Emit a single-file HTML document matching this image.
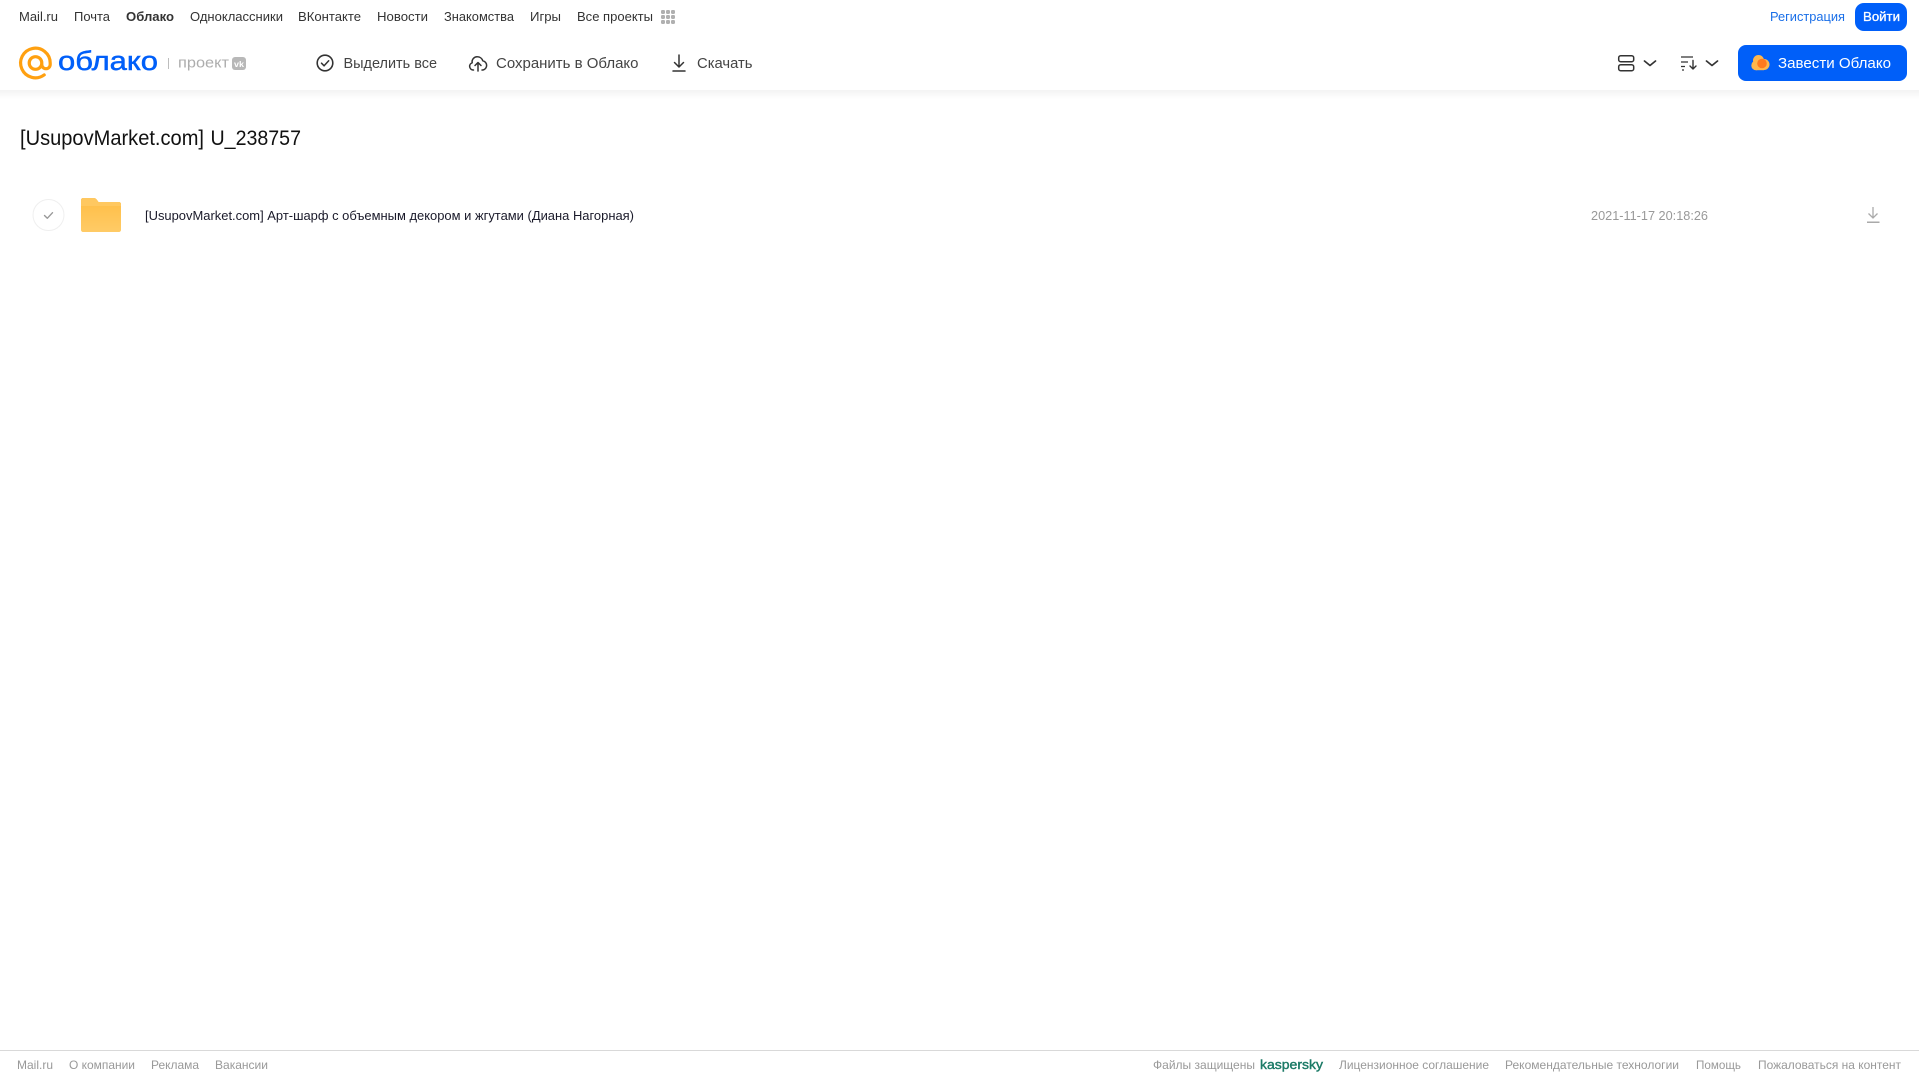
<!DOCTYPE html>
<html lang="ru">
<head>
<meta charset="utf-8">
<title>[UsupovMarket.com] U_238757</title>
<style>
html,body{margin:0;padding:0;background:#fff;width:1919px;height:1079px;overflow:hidden}
svg{display:block;position:absolute;left:0;top:0}
text{font-family:"Liberation Sans",Arial,sans-serif;white-space:pre}
.n{font-size:13px;fill:#333}
.a{font-size:15px;fill:#444}
.f{font-size:12px;fill:#999}
</style>
</head>
<body>
<svg width="1919" height="1079" viewBox="0 0 1919 1079" xmlns="http://www.w3.org/2000/svg">
<defs>
<linearGradient id="sh" x1="0" y1="0" x2="0" y2="1"><stop offset="0" stop-color="#f3f3f3"/><stop offset="1" stop-color="#ffffff"/></linearGradient>
<linearGradient id="fo" x1="0" y1="0" x2="0" y2="1"><stop offset="0" stop-color="#ffbd45"/><stop offset="1" stop-color="#ffcb66"/></linearGradient>
</defs>
<rect x="0" y="90" width="1919" height="9" fill="url(#sh)"/>

<!-- top nav -->
<text class="n" x="19" y="21" textLength="39" lengthAdjust="spacingAndGlyphs">Mail.ru</text>
<text class="n" x="74" y="21" textLength="36" lengthAdjust="spacingAndGlyphs">Почта</text>
<text class="n" x="126" y="21" textLength="48" lengthAdjust="spacingAndGlyphs" font-weight="700">Облако</text>
<text class="n" x="190" y="21" textLength="93" lengthAdjust="spacingAndGlyphs">Одноклассники</text>
<text class="n" x="298" y="21" textLength="63" lengthAdjust="spacingAndGlyphs">ВКонтакте</text>
<text class="n" x="377" y="21" textLength="51" lengthAdjust="spacingAndGlyphs">Новости</text>
<text class="n" x="444" y="21" textLength="70" lengthAdjust="spacingAndGlyphs">Знакомства</text>
<text class="n" x="530" y="21" textLength="31" lengthAdjust="spacingAndGlyphs">Игры</text>
<text class="n" x="577" y="21" textLength="76" lengthAdjust="spacingAndGlyphs">Все проекты</text>
<g fill="#b0b0b0">
<rect x="661" y="10" width="4" height="4" rx="1.200"/><rect x="666" y="10" width="4" height="4" rx="1.200"/><rect x="671" y="10" width="4" height="4" rx="1.200"/>
<rect x="661" y="15" width="4" height="4" rx="1.200"/><rect x="666" y="15" width="4" height="4" rx="1.200"/><rect x="671" y="15" width="4" height="4" rx="1.200"/>
<rect x="661" y="20" width="4" height="4" rx="1.200"/><rect x="666" y="20" width="4" height="4" rx="1.200"/><rect x="671" y="20" width="4" height="4" rx="1.200"/>
</g>
<text x="1770" y="21" font-size="13" fill="#1a6fe8" textLength="75" lengthAdjust="spacingAndGlyphs">Регистрация</text>
<rect x="1855" y="3" width="52" height="28" rx="9" fill="#005ff9"/>
<text x="1863" y="21" font-size="13" fill="#fff" stroke="#fff" stroke-width=".3" textLength="37" lengthAdjust="spacingAndGlyphs">Войти</text>

<!-- logo -->
<path d="M41.800 63a6.300 6.300 0 1 1-12.600 0a6.300 6.300 0 1 1 12.600 0v1.500a4.200 4.200 0 0 0 8.400 0V63a14.800 14.800 0 1 0-6 11.900" fill="none" stroke="#ffa010" stroke-width="3.200" stroke-linecap="round"/>
<text x="58" y="70" font-size="27" fill="#005ff9" stroke="#005ff9" stroke-width=".5" textLength="100" lengthAdjust="spacingAndGlyphs">облако</text>
<rect x="168" y="58" width="1" height="11" fill="#bdbdbd"/>
<text x="178" y="67.500" font-size="15" fill="#adadad" textLength="51" lengthAdjust="spacingAndGlyphs">проект</text>
<rect x="232" y="57" width="14" height="13" rx="3" fill="#b8b8b8"/>
<text x="234" y="67" font-size="8.500" font-weight="700" fill="#fff" textLength="10" lengthAdjust="spacingAndGlyphs">vk</text>

<!-- actions -->
<circle cx="325" cy="63" r="7.800" fill="none" stroke="#333" stroke-width="1.600"/>
<path d="M321.500 63.200l2.600 2.600 4.600-5" fill="none" stroke="#333" stroke-width="1.500" stroke-linecap="round" stroke-linejoin="round"/>
<text class="a" x="343.500" y="68" textLength="93.500" lengthAdjust="spacingAndGlyphs">Выделить все</text>

<path d="M473.500 70h-.5a3.700 3.700 0 0 1-.8-7.200a5 5 0 0 1 5.300-6a5.800 5.800 0 0 1 5.300 4a4.700 4.700 0 0 1 .2 9.200h-1" fill="none" stroke="#333" stroke-width="1.500" stroke-linecap="round" stroke-linejoin="round"/>
<path d="M478 71v-8M475 65.500l3-3 3 3" fill="none" stroke="#333" stroke-width="1.500" stroke-linecap="round" stroke-linejoin="round"/>
<text class="a" x="496" y="68" textLength="142.500" lengthAdjust="spacingAndGlyphs">Сохранить в Облако</text>

<path d="M679 55v12M674.500 62.500l4.500 4.500 4.500-4.500M673 71h12" fill="none" stroke="#333" stroke-width="1.500" stroke-linecap="round" stroke-linejoin="round"/>
<text class="a" x="697" y="68" textLength="55.500" lengthAdjust="spacingAndGlyphs">Скачать</text>

<!-- right controls -->
<g fill="none" stroke="#333" stroke-width="1.500">
<rect x="1618.700" y="55.700" width="15" height="6" rx="2"/>
<rect x="1618.700" y="64.700" width="15" height="6" rx="2"/>
</g>
<path d="M1644.500 61l5.500 4.500 5.500-4.500M1706.500 61l5.500 4.500 5.500-4.500" fill="none" stroke="#333" stroke-width="1.700" stroke-linecap="round" stroke-linejoin="round"/>
<path d="M1681 57h12M1681 62h7M1681 66.500h4M1682 70h2" fill="none" stroke="#333" stroke-width="1.300"/>
<path d="M1693 60.500v8.500M1690 66l3 3 3-3" fill="none" stroke="#333" stroke-width="1.400" stroke-linecap="round" stroke-linejoin="round"/>

<rect x="1738" y="45" width="169" height="36" rx="8" fill="#005ff9"/>
<g fill="#ffb74d">
<circle cx="1756" cy="65.500" r="4.700"/>
<circle cx="1758.500" cy="60.500" r="5.500"/>
<circle cx="1764" cy="64.500" r="5.500"/>
<rect x="1756" y="65" width="8" height="5.200"/>
</g>
<circle cx="1762" cy="63.500" r="4.800" fill="#ff7a1f"/>
<text x="1778" y="68" font-size="15" fill="#fff" textLength="113" lengthAdjust="spacingAndGlyphs">Завести Облако</text>

<!-- title -->
<text x="20" y="145" font-size="21" fill="#111" textLength="184" lengthAdjust="spacingAndGlyphs">[UsupovMarket.com]</text>
<text x="210.500" y="145" font-size="21" fill="#111" textLength="90.500" lengthAdjust="spacingAndGlyphs">U_238757</text>

<!-- row -->
<circle cx="48.500" cy="215" r="15.500" fill="#fff" stroke="#efefef" stroke-width="1"/>
<path d="M44.500 215.500l2.800 2.800 5.200-5.600" fill="none" stroke="#999" stroke-width="1.400" stroke-linecap="round" stroke-linejoin="round"/>
<path d="M83 198h10.500c1.500 0 2.500.6 3.400 1.700l1.600 2.300h20.500c1.100 0 2 .9 2 2v26c0 1.100-.9 2-2 2H83c-1.100 0-2-.9-2-2V200c0-1.100.9-2 2-2z" fill="url(#fo)"/>
<path d="M81 206h40v-2c0-1.100-.9-2-2-2H98.500l-1.600-2.300c-.9-1.100-1.900-1.700-3.400-1.700H83c-1.100 0-2 .9-2 2z" fill="#ffc860"/>
<text x="145" y="220" font-size="13" fill="#1a1a2a" textLength="489" lengthAdjust="spacingAndGlyphs">[UsupovMarket.com] Арт-шарф с объемным декором и жгутами (Диана Нагорная)</text>
<text x="1591" y="220" font-size="13" fill="#999" textLength="117" lengthAdjust="spacingAndGlyphs">2021-11-17 20:18:26</text>
<path d="M1873 207v11M1868.500 213.500l4.500 4.500 4.500-4.500" fill="none" stroke="#aaa" stroke-width="1.300"/>
<rect x="1867" y="221.500" width="12.500" height="1.500" fill="#aaa"/>

<!-- footer -->
<rect x="0" y="1050" width="1919" height="1" fill="#d9d9d9"/>
<text class="f" x="17" y="1069" textLength="36" lengthAdjust="spacingAndGlyphs">Mail.ru</text>
<text class="f" x="69" y="1069" textLength="66" lengthAdjust="spacingAndGlyphs">О компании</text>
<text class="f" x="151" y="1069" textLength="48" lengthAdjust="spacingAndGlyphs">Реклама</text>
<text class="f" x="215" y="1069" textLength="53" lengthAdjust="spacingAndGlyphs">Вакансии</text>
<text class="f" x="1153" y="1069" textLength="102" lengthAdjust="spacingAndGlyphs">Файлы защищены</text>
<text x="1260" y="1069" font-size="13" fill="#1b7a66" stroke="#1b7a66" stroke-width=".4" textLength="63" lengthAdjust="spacingAndGlyphs">kaspersky</text>
<text class="f" x="1339" y="1069" textLength="150" lengthAdjust="spacingAndGlyphs">Лицензионное соглашение</text>
<text class="f" x="1505" y="1069" textLength="174" lengthAdjust="spacingAndGlyphs">Рекомендательные технологии</text>
<text class="f" x="1696" y="1069" textLength="45" lengthAdjust="spacingAndGlyphs">Помощь</text>
<text class="f" x="1758" y="1069" textLength="143" lengthAdjust="spacingAndGlyphs">Пожаловаться на контент</text>
</svg>
</body>
</html>
